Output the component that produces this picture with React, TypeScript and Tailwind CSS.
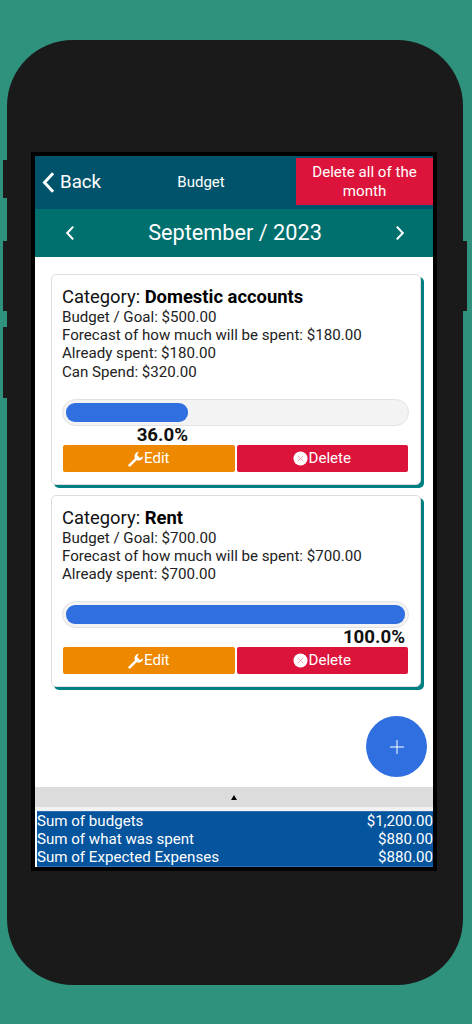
interface IBudget {
    category: string,
    lines: string[],
    percent: number,
    label: string,
    gap: string
}

const budgets: IBudget[] = [
    {
        category: "Domestic accounts",
        lines: ["Budget / Goal: $500.00", "Forecast of how much will be spent: $180.00", "Already spent: $180.00", "Can Spend: $320.00"],
        percent: 36,
        label: "36.0%",
        gap: "mt-[18.2px]"
    },
    {
        category: "Rent",
        lines: ["Budget / Goal: $700.00", "Forecast of how much will be spent: $700.00", "Already spent: $700.00"],
        percent: 100,
        label: "100.0%",
        gap: "mt-[17.4px]"
    }
]

const totals = [
    ["Sum of budgets", "$1,200.00"],
    ["Sum of what was spent", "$880.00"],
    ["Sum of Expected Expenses", "$880.00"]
]

const Chevron = ({ dir, className }: { dir: "left" | "right", className: string }) => (
    <svg viewBox="0 0 12 20" className={className} fill="none" stroke="currentColor" strokeWidth="2.6">
        <path d={dir === "left" ? "M10 2 L2.5 10 L10 18" : "M2 2 L9.5 10 L2 18"} />
    </svg>
)

const WrenchIcon = () => (
    <svg viewBox="0 0 16 16" className="w-[16px] h-[16px] shrink-0" fill="#fff">
        <path d="M1.6 14.4 L8.4 7.6" stroke="#fff" strokeWidth="2.6" strokeLinecap="round" />
        <path d="M10.8 0.8 A4.6 4.6 0 0 0 6.6 6.6 L9.4 9.4 A4.6 4.6 0 0 0 15.2 5.2 L12 7 L9 4 Z" />
    </svg>
)

const CloseCircle = () => (
    <svg viewBox="0 0 16 16" className="w-[15px] h-[15px] shrink-0">
        <circle cx="8" cy="8" r="7.5" fill="#fff" />
        <path d="M5 5 L11 11 M11 5 L5 11" stroke="#f29aab" strokeWidth="1" />
    </svg>
)

const BudgetCard = ({ budget }: { budget: IBudget }) => (
    <div className="rounded-[5px] border border-[#dddddd] bg-white pl-[10px] pr-[11px] pt-[11px] pb-[12px] shadow-[3px_3px_0_#008080]">
        <p className="mb-[1px] text-[18.4px] leading-[21px] text-[#111]">Category: <b className="font-bold text-black">{budget.category}</b></p>
        {budget.lines.map((line) => (
            <p key={line} className="text-[15.1px] leading-[18.2px] text-[#222]">{line}</p>
        ))}
        <div className={`${budget.gap} h-[27px] rounded-full border border-[#e2e2e2] bg-[#f3f3f3] p-[3px]`}>
            <div className="h-[19px] rounded-[9px] bg-[#2f6fe0]" style={{ width: `${budget.percent}%` }} />
        </div>
        <div className="px-[4px]">
            <p className="text-right text-[18.7px] leading-[19px] font-bold text-[#111]" style={{ width: `${budget.percent}%` }}>{budget.label}</p>
        </div>
        <div className="flex gap-[2px] px-[1px]">
            <button className="flex h-[27px] flex-1 items-center justify-center rounded-[2px] bg-[#ee8800] text-[15.1px] text-white">
                <WrenchIcon />Edit
            </button>
            <button className="flex h-[27px] flex-1 items-center justify-center rounded-[2px] bg-[#dc143c] text-[15.1px] text-white">
                <CloseCircle />Delete
            </button>
        </div>
    </div>
)

const App = () => {
    return (
        <div className="relative w-[472px] h-[1024px] overflow-hidden bg-[#2f927c] pl-[7px] pr-[9px] pt-[40px] font-['Roboto',sans-serif]">
            <div className="absolute left-[3px] top-[160px] w-[5px] h-[38px] bg-[#1a1a1a]" />
            <div className="absolute left-[3px] top-[241px] w-[5px] h-[70px] bg-[#1a1a1a]" />
            <div className="absolute left-[3px] top-[327px] w-[5px] h-[71px] bg-[#1a1a1a]" />
            <div className="absolute right-[5px] top-[241px] w-[5px] h-[70px] bg-[#1a1a1a]" />

            <div className="relative h-[945px] rounded-[66px] bg-[#1a1a1a] pl-[24px] pr-[26px] pt-[112px]">
                <div className="flex h-[719px] flex-col border-[4px] border-black bg-white">
                    <header className="flex h-[53px] shrink-0 items-start bg-[#00536a] text-white">
                        <div className="flex h-full w-[261px] items-center">
                            <div className="flex w-[120px] items-center pl-[6px]">
                                <Chevron dir="left" className="w-[15px] h-[23px]" />
                                <span className="ml-[4px] text-[18.7px]">Back</span>
                            </div>
                            <span className="w-[92px] text-center text-[15px]">Budget</span>
                        </div>
                        <button className="mt-[2px] h-[47px] flex-1 bg-[#dc143c] px-[8px] text-center text-[15.1px] leading-[18.3px] text-white">Delete all of the month</button>
                    </header>

                    <div className="flex h-[48px] shrink-0 items-center justify-between bg-[#00706f] pl-[30px] pr-[28px] text-white">
                        <Chevron dir="left" className="w-[10px] h-[16px]" />
                        <span className="text-[21.7px]">September / 2023</span>
                        <Chevron dir="right" className="w-[10px] h-[16px]" />
                    </div>

                    <main className="relative flex flex-1 flex-col gap-[10px] pl-[16px] pr-[12px] pt-[17px]">
                        {budgets.map((budget) => (
                            <BudgetCard key={budget.category} budget={budget} />
                        ))}
                        <button className="absolute right-[6px] bottom-[10px] flex w-[61px] h-[61px] items-center justify-center rounded-full bg-[#2f6fe0] text-white">
                            <svg viewBox="0 0 14 14" className="w-[14px] h-[14px]" stroke="currentColor" strokeWidth="1">
                                <path d="M7 0 V14 M0 7 H14" />
                            </svg>
                        </button>
                    </main>

                    <div className="flex h-[20px] shrink-0 items-center justify-center bg-[#dcdcdc] text-black">
                        <div className="h-0 w-0 border-x-[3px] border-b-[5px] border-x-transparent border-b-black" />
                    </div>
                    <div className="h-[4px] shrink-0 bg-[#f2f2f2]" />
                    <div className="h-[56px] shrink-0 pl-[2px]">
                        <div className="h-full border-y border-[#2f6fb5] bg-[#05549e] text-[15.1px] leading-[18.2px] text-white">
                            {totals.map(([label, value]) => (
                                <div key={label} className="flex justify-between">
                                    <span>{label}</span>
                                    <span>{value}</span>
                                </div>
                            ))}
                        </div>
                    </div>
                </div>
            </div>
        </div>
    );
};

export default App;
